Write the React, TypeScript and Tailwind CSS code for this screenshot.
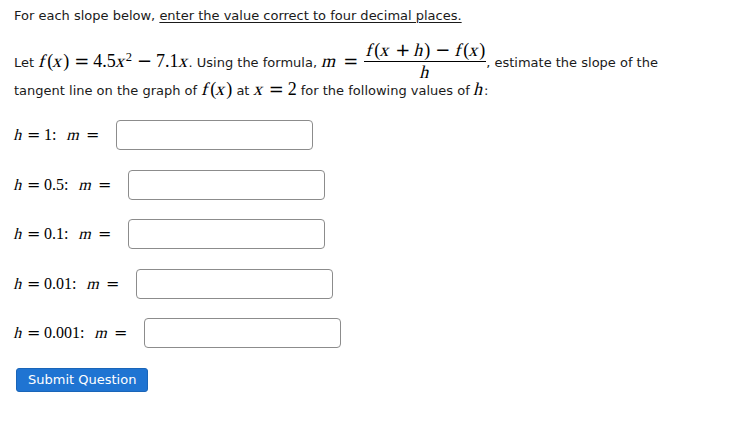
const sans = "font-['DejaVu_Sans',sans-serif]";
const math = "font-['Liberation_Serif',serif] text-black";

// math variable: upright serif glyph slanted, so it reads as TeX italic
function V({ children, wide = false }: { children: React.ReactNode; wide?: boolean }) {
  return (
    <span className={`${wide ? "px-[1.5px]" : "px-[0.5px]"} inline-block -skew-x-[14deg] not-italic`}>
      {children}
    </span>
  );
}

// relation / binary operator
function Op({ c, big = false }: { c: string; big?: boolean }) {
  return (
    <span
      className={`inline-block text-center font-['DejaVu_Sans',sans-serif] not-italic ${
        big ? "mx-[5px] w-[14px] text-[18px]" : "mx-[4px] w-[13px] text-[16px]"
      }`}
    >
      {c}
    </span>
  );
}

function Row({ h }: { h: string }) {
  return (
    <div className="flex h-[30px] items-center">
      <span className={`${math} text-[16px]`}>
        <V>h</V>
        <Op c="=" />
        {h}:<span className="ml-[10px]" />
        <V wide>m</V>
        <Op c="=" />
      </span>
      <input
        type="text"
        className="ml-[13px] h-[30px] w-[197px] rounded-[4px] border border-[#8c8c8c] bg-white outline-none"
      />
    </div>
  );
}

export default function App() {
  return (
    <div className={`${sans} min-h-[425px] bg-white pl-[14px] pt-[6px] text-[13px] text-[#1a1a1a]`}>
      <p className="leading-[20px]">
        For each slope below,{" "}
        <span className="underline underline-offset-2">enter the value correct to four decimal places.</span>
      </p>

      <div className="mt-[22px] leading-[26px]">
        Let{" "}
        <span className={`${math} text-[18px]`}>
          <V wide>f</V>(<V>x</V>)<Op c="=" big />4.5<V>x</V>
          <sup className="text-[12.5px]">2</sup>
          <Op c="−" big />7.1<V>x</V>
        </span>
        . Using the formula,{" "}
        <span className={`${math} text-[18px]`}>
          <V wide>m</V>
          <Op c="=" big />
        </span>
        <span
          className={`${math} relative -top-[3px] my-[-12px] ml-[2px] inline-flex flex-col items-center align-middle text-[18px] leading-[19px]`}
        >
          <span className="px-[1px]">
            <V wide>f</V>(<V>x</V>
            <Op c="+" big />
            <V>h</V>)<Op c="−" big />
            <V wide>f</V>(<V>x</V>)
          </span>
          <span className="my-[1px] h-px w-full bg-black" />
          <span>
            <V>h</V>
          </span>
        </span>
        , estimate the slope of the
        <br />
        tangent line on the graph of{" "}
        <span className={`${math} text-[18px]`}>
          <V wide>f</V>(<V>x</V>)
        </span>{" "}
        at{" "}
        <span className={`${math} text-[18px]`}>
          <V>x</V>
          <Op c="=" big />2
        </span>{" "}
        for the following values of{" "}
        <span className={`${math} text-[18px]`}>
          <V>h</V>
        </span>
        :
      </div>

      <div className="mt-[16px] flex flex-col gap-[19.5px]">
        <Row h="1" />
        <Row h="0.5" />
        <Row h="0.1" />
        <Row h="0.01" />
        <Row h="0.001" />
      </div>

      <button
        type="button"
        className="ml-[2px] mt-[20px] h-[24px] rounded-[3px] border border-[#1a65b8] bg-[#1f74d2] px-[11px] text-[13px] text-white"
      >
        Submit Question
      </button>
    </div>
  );
}
